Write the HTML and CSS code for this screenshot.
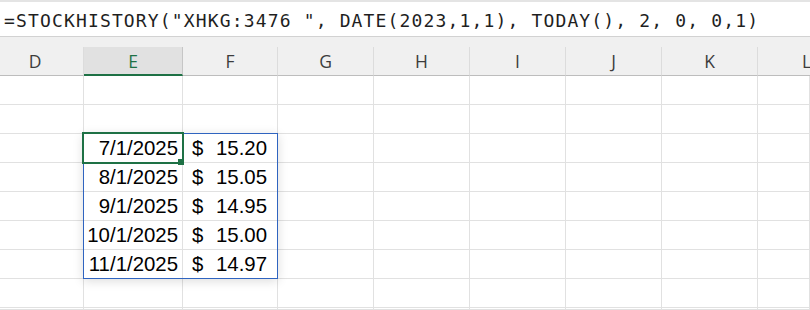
FILE: index.html
```html
<!DOCTYPE html>
<html lang="en">

<head>
    <meta charset="UTF-8">
    <title>STOCKHISTORY</title>
    <link rel="stylesheet" href="styles.css">
</head>

<body>
    <div class="formula_bar">
        <span class="formula">=STOCKHISTORY("XHKG:3476 ", DATE(2023,1,1), TODAY(), 2, 0, 0,1)</span>
    </div>

    <div class="sheet">
        <!-- column headers -->
        <div class="col_head col_head_first">D</div>
        <div class="col_head col_head_on">E</div>
        <div class="col_head">F</div>
        <div class="col_head">G</div>
        <div class="col_head">H</div>
        <div class="col_head">I</div>
        <div class="col_head">J</div>
        <div class="col_head">K</div>
        <div class="col_head col_head_last">L</div>

        <!-- row 1 -->
        <div class="cell"></div><div class="cell"></div><div class="cell"></div>
        <div class="cell"></div><div class="cell"></div><div class="cell"></div>
        <div class="cell"></div><div class="cell"></div><div class="cell"></div>
        <!-- row 2 -->
        <div class="cell"></div><div class="cell"></div><div class="cell"></div>
        <div class="cell"></div><div class="cell"></div><div class="cell"></div>
        <div class="cell"></div><div class="cell"></div><div class="cell"></div>
        <!-- row 3 -->
        <div class="cell"></div>
        <div class="cell date">7/1/2025</div>
        <div class="cell money"><span>$</span><span>15.20</span></div>
        <div class="cell"></div><div class="cell"></div><div class="cell"></div>
        <div class="cell"></div><div class="cell"></div><div class="cell"></div>
        <!-- row 4 -->
        <div class="cell"></div>
        <div class="cell date">8/1/2025</div>
        <div class="cell money"><span>$</span><span>15.05</span></div>
        <div class="cell"></div><div class="cell"></div><div class="cell"></div>
        <div class="cell"></div><div class="cell"></div><div class="cell"></div>
        <!-- row 5 -->
        <div class="cell"></div>
        <div class="cell date">9/1/2025</div>
        <div class="cell money"><span>$</span><span>14.95</span></div>
        <div class="cell"></div><div class="cell"></div><div class="cell"></div>
        <div class="cell"></div><div class="cell"></div><div class="cell"></div>
        <!-- row 6 -->
        <div class="cell"></div>
        <div class="cell date">10/1/2025</div>
        <div class="cell money"><span>$</span><span>15.00</span></div>
        <div class="cell"></div><div class="cell"></div><div class="cell"></div>
        <div class="cell"></div><div class="cell"></div><div class="cell"></div>
        <!-- row 7 -->
        <div class="cell"></div>
        <div class="cell date">11/1/2025</div>
        <div class="cell money"><span>$</span><span>14.97</span></div>
        <div class="cell"></div><div class="cell"></div><div class="cell"></div>
        <div class="cell"></div><div class="cell"></div><div class="cell"></div>
        <!-- row 8 -->
        <div class="cell"></div><div class="cell"></div><div class="cell"></div>
        <div class="cell"></div><div class="cell"></div><div class="cell"></div>
        <div class="cell"></div><div class="cell"></div><div class="cell"></div>
        <!-- row 9, only its top shows -->
        <div class="cell"></div><div class="cell"></div><div class="cell"></div>
        <div class="cell"></div><div class="cell"></div><div class="cell"></div>
        <div class="cell"></div><div class="cell"></div><div class="cell"></div>

        <!-- selection E3:F7 and active cell E3 -->
        <div class="range"></div>
        <div class="active"><span class="fill_handle"></span></div>
    </div>
</body>

</html>
```

FILE: styles.css
```css
* {
    box-sizing: border-box;
}

body {
    margin: 0;
    width: 810px;
    height: 310px;
    overflow: hidden;
    background: #fff;
    font-family: "Liberation Sans", Arial, sans-serif;
}

.formula_bar {
    height: 37px;
    padding: 3px 0 0 4px;
    border-top: 2px solid #e4e4e4;
    border-bottom: 1px solid #d2d2d2;
}

.formula {
    display: block;
    font-family: "DejaVu Sans Mono", "Liberation Mono", monospace;
    font-size: 18px;
    line-height: 31px;
    letter-spacing: 1.15px;
    color: #1f1f1f;
    white-space: nowrap;
}

/* D and L are cut by the window edges */
.sheet {
    position: relative;
    display: grid;
    grid-template-columns: 84px 99px 95px repeat(5, 96px) 52px;
    grid-template-rows: repeat(9, 29px) 2px;
    height: 273px;
    padding-top: 10px;
    overflow: hidden;
    background: #f0f0f0;
}

.col_head {
    padding-top: 1px;
    font-family: "Open Sans", "Noto Sans", sans-serif;
    font-size: 17.5px;
    line-height: 27px;
    text-align: center;
    color: #3c3c3c;
    border-right: 1px solid #dcdcdc;
    border-bottom: 1px solid #bdbdbd;
}

.col_head_first {
    padding-right: 13px;
}

.col_head_last {
    padding-left: 44px;
    overflow: hidden;
    border-right: 0;
}

.col_head_on {
    line-height: 26px;
    color: #1e7145;
    background: #e1e1e1;
    border-right-color: #c6c6c6;
    border-bottom: 2px solid #1e7145;
}

.cell {
    padding-top: 1px;
    font-size: 20.4px;
    line-height: 27px;
    color: #000;
    white-space: nowrap;
    background: #fff;
    border-right: 1px solid #e1e1e1;
    border-bottom: 1px solid #e1e1e1;
}

.date {
    padding-right: 4px;
    text-align: right;
}

.money {
    display: flex;
    justify-content: space-between;
    padding: 1px 10px 0 9px;
}

.range {
    position: absolute;
    grid-column: 2 / 4;
    grid-row: 4 / 9;
    top: -1px;
    left: -1px;
    right: 0;
    bottom: 0;
    border: 1px solid #2f64c0;
    box-shadow: 0 2px 10px rgba(0, 0, 0, 0.14);
}

.active {
    position: absolute;
    grid-column: 2 / 3;
    grid-row: 4 / 5;
    top: -2px;
    left: -2px;
    right: -1px;
    bottom: -1px;
    border: 2px solid #1e7145;
}

.fill_handle {
    position: absolute;
    right: -2px;
    bottom: -3px;
    width: 6px;
    height: 6px;
    background: #1e7145;
}
```
